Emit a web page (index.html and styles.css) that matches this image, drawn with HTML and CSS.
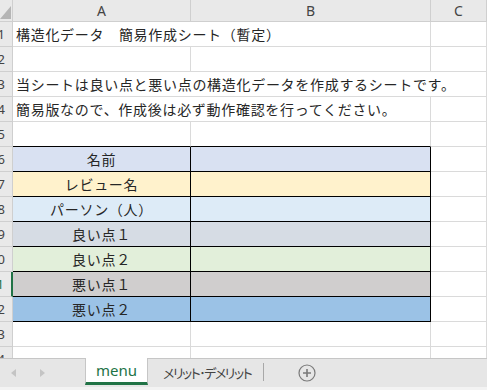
FILE: index.html
```html
<!DOCTYPE html>
<html lang="ja">
<head>
    <meta charset="UTF-8">
    <meta name="viewport" content="width=device-width, initial-scale=1.0">
    <title>menu</title>
    <link rel="stylesheet" href="styles.css">
</head>
<body>
    <div class="sheet">
        <div class="grid">
            <!-- column headers -->
            <div class="corner"><span class="corner-tri"></span></div>
            <div class="col-head">A</div>
            <div class="col-head">B</div>
            <div class="col-head">C</div>

            <div class="row-head">1</div>
            <div class="cell span2">構造化データ　簡易作成シート（暫定）</div>
            <div class="cell"></div>

            <div class="row-head">2</div>
            <div class="cell"></div>
            <div class="cell"></div>
            <div class="cell"></div>

            <div class="row-head">3</div>
            <div class="cell span3">当シートは良い点と悪い点の構造化データを作成するシートです。</div>

            <div class="row-head">4</div>
            <div class="cell span2">簡易版なので、作成後は必ず動作確認を行ってください。</div>
            <div class="cell"></div>

            <div class="row-head">5</div>
            <div class="cell above"></div>
            <div class="cell above"></div>
            <div class="cell"></div>

            <div class="row-head">6</div>
            <div class="cell box c-name">名前</div>
            <div class="cell box c-name"></div>
            <div class="cell"></div>

            <div class="row-head">7</div>
            <div class="cell box c-review">レビュー名</div>
            <div class="cell box c-review"></div>
            <div class="cell"></div>

            <div class="row-head">8</div>
            <div class="cell box c-person">パーソン（人）</div>
            <div class="cell box c-person"></div>
            <div class="cell"></div>

            <div class="row-head">9</div>
            <div class="cell box c-good1">良い点１</div>
            <div class="cell box c-good1"></div>
            <div class="cell"></div>

            <div class="row-head">10</div>
            <div class="cell box c-good2">良い点２</div>
            <div class="cell box c-good2"></div>
            <div class="cell"></div>

            <div class="row-head active">11</div>
            <div class="cell box c-bad1">悪い点１</div>
            <div class="cell box c-bad1"></div>
            <div class="cell"></div>

            <div class="row-head">12</div>
            <div class="cell box c-bad2">悪い点２</div>
            <div class="cell box c-bad2"></div>
            <div class="cell"></div>

            <div class="row-head">13</div>
            <div class="cell"></div>
            <div class="cell"></div>
            <div class="cell"></div>

            <div class="row-head">14</div>
            <div class="cell"></div>
            <div class="cell"></div>
            <div class="cell"></div>
        </div>
    </div>

    <div class="tab-bar">
        <div class="tab-nav">
            <svg width="8" height="10" viewBox="0 0 8 10"><polygon points="6,1 1,5 6,9" fill="#c4c4c4"/></svg>
            <svg width="8" height="10" viewBox="0 0 8 10"><polygon points="2,1 7,5 2,9" fill="#c4c4c4"/></svg>
        </div>
        <div class="tab tab-active">menu</div>
        <div class="tab tab-narrow">メリット･デメリット</div>
        <div class="tab-sep"></div>
        <div class="tab-add">
            <svg width="18" height="18" viewBox="0 0 18 18">
                <circle cx="9" cy="9" r="8" fill="none" stroke="#7a7a7a" stroke-width="1.2"/>
                <path d="M9 5v8M5 9h8" stroke="#7a7a7a" stroke-width="1.6"/>
            </svg>
        </div>
    </div>
    <div class="status"></div>
</body>
</html>
```

FILE: styles.css
```css
body {
    margin: 0;
    width: 487px;
    height: 390px;
    overflow: hidden;
    background-color: #ffffff;
    font-family: "Noto Sans CJK JP", "Noto Sans", sans-serif;
    color: #262626;
}

.sheet {
    height: 358px;
    overflow: hidden;
}

.grid {
    display: grid;
    grid-template-columns: 13px 178px 240px 56px;
    grid-template-rows: 22px;
    grid-auto-rows: 25px;
}

.corner {
    position: relative;
    background-color: #e9e9e9;
    border-right: 1px solid #cfcfcf;
    border-bottom: 1px solid #cfcfcf;
}

/* the little triangle in the top-left corner */
.corner-tri {
    position: absolute;
    right: 1px;
    bottom: 2px;
    width: 0;
    height: 0;
    border-left: 11px solid transparent;
    border-bottom: 13px solid #b5b5b5;
}

.col-head {
    display: flex;
    align-items: center;
    justify-content: center;
    background-color: #e9e9e9;
    border-right: 1px solid #cfcfcf;
    border-bottom: 1px solid #cfcfcf;
    font-family: "Noto Sans", sans-serif;
    font-size: 14px;
    color: #444;
}

.row-head {
    display: flex;
    align-items: center;
    justify-content: flex-end;
    overflow: hidden;
    padding-right: 7px;
    background-color: #e9e9e9;
    border-right: 1px solid #cfcfcf;
    border-bottom: 1px solid #cfcfcf;
    font-family: "Noto Sans", sans-serif;
    font-size: 13px;
    color: #444;
}

.row-head.active {
    border-right: 2px solid #217346;
    color: #217346;
}

.cell {
    display: flex;
    align-items: center;
    padding-left: 3px;
    border-right: 1px solid #dadada;
    border-bottom: 1px solid #dadada;
    font-size: 14px;
    letter-spacing: 0.7px;
    white-space: nowrap;
}

.span2 {
    grid-column: span 2;
}

.span3 {
    grid-column: span 3;
}

.above {
    border-bottom-color: #000;
}

.box {
    justify-content: center;
    padding-left: 0;
    border-right-color: #000;
    border-bottom-color: #000;
}

.c-name { background-color: #d9e1f2; }
.c-review { background-color: #fff2cc; }
.c-person { background-color: #ddebf7; }
.c-good1 { background-color: #d6dce4; }
.c-good2 { background-color: #e2efda; }
.c-bad1 { background-color: #d0cece; }
.c-bad2 { background-color: #9bc2e6; }

.tab-bar {
    display: flex;
    align-items: stretch;
    height: 28px;
    background-color: #e6e6e6;
    border-top: 1px solid #c6c6c6;
}

.tab-nav {
    display: flex;
    align-items: center;
    gap: 20px;
    width: 85px;
    padding-left: 10px;
    box-sizing: border-box;
}

.tab {
    display: flex;
    align-items: center;
    padding: 0 12px 0 15px;
    font-size: 13px;
    color: #444;
    margin-bottom: 2px;
}

.tab-narrow {
    font-feature-settings: "palt";
    letter-spacing: -1.5px;
    white-space: nowrap;
}

.tab-active {
    width: 63px;
    box-sizing: border-box;
    justify-content: center;
    padding: 0;
    background-color: #ffffff;
    border-left: 1px solid #c6c6c6;
    border-right: 1px solid #c6c6c6;
    border-bottom: 3px solid #217346;
    margin-top: -1px;
    font-family: "Noto Sans", sans-serif;
    font-size: 15px;
    color: #217346;
}

.tab-sep {
    width: 1px;
    margin: 4px 0 6px 0;
    background-color: #a8a8a8;
}

.tab-add {
    display: flex;
    align-items: center;
    padding-left: 34px;
}

.status {
    height: 3px;
    background-color: #f3f3f3;
}
```
